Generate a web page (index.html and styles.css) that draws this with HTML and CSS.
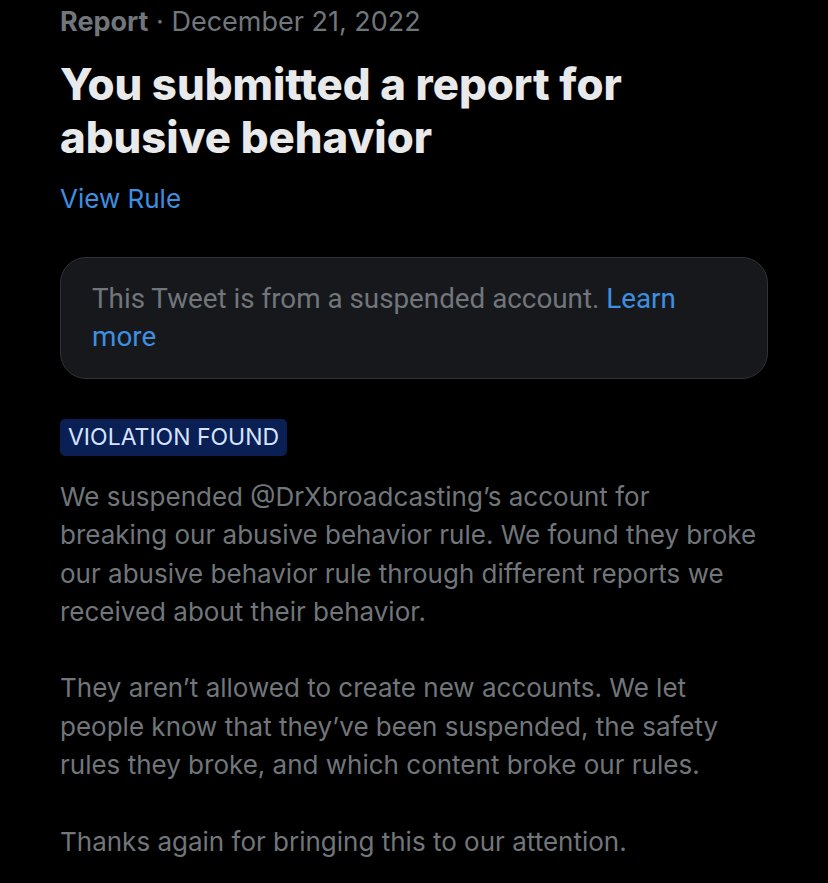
FILE: index.html
```html
<!DOCTYPE html>
<html lang="en">
<head>
<meta charset="utf-8">
<title>Report</title>
<link rel="stylesheet" href="styles.css">
</head>
<body>
<main class="page">
  <div class="meta"><span class="meta-strong">Report</span> · December 21, 2022</div>
  <h1 class="title">You submitted a report for abusive behavior</h1>
  <a class="link view-rule" href="#">View Rule</a>
  <div class="card">
    <p class="card-text">This Tweet is from a suspended account. <a class="link" href="#">Learn more</a></p>
  </div>
  <div class="badge">VIOLATION FOUND</div>
  <div class="body">
    <p>We suspended @DrXbroadcasting’s account for breaking our abusive behavior rule. We found they broke our abusive behavior rule through different reports we received about their behavior.</p>
    <p>They aren’t allowed to create new accounts. We let people know that they’ve been suspended, the safety rules they broke, and which content broke our rules.</p>
    <p>Thanks again for bringing this to our attention.</p>
  </div>
</main>
</body>
</html>
```
FILE: styles.css
```css
html, body {
  margin: 0;
  padding: 0;
  background: #000;
}
body {
  font-family: Inter, "Noto Sans", "Liberation Sans", sans-serif;
  color: #e7e9ea;
}
.page {
  width: 708px;
  padding: 0 0 0 60px;
  display: flex;
  flex-direction: column;
  align-items: flex-start;
}
.meta {
  font-size: 27px;
  line-height: 32px;
  color: #71767b;
  margin-top: 6px;
}
.meta-strong {
  font-weight: 700;
}
.title {
  font-size: 43.7px;
  line-height: 53px;
  font-weight: 800;
  margin: 20px 0 0 0;
  color: #e7e9ea;
  width: 640px;
}
.link {
  color: #3e8fe0;
  text-decoration: none;
}
.view-rule {
  font-size: 26px;
  line-height: 32px;
  margin-top: 19px;
}
.card {
  align-self: stretch;
  margin-top: 42px;
  background: #16181c;
  border: 1px solid #2f3336;
  border-radius: 26px;
  padding: 22px 31px;
}
.card-text {
  margin: 0;
  max-width: 610px;
  font-family: Roboto, "Liberation Sans", sans-serif;
  font-size: 27.8px;
  line-height: 38px;
  color: #71767b;
}
.badge {
  margin-top: 40px;
  background: #0a1f54;
  color: #d6e4ff;
  border-radius: 5px;
  font-size: 23px;
  line-height: 37px;
  padding: 0 8px;
}
.body {
  margin-top: 22px;
  width: 701px;
  font-size: 26px;
  line-height: 38.3px;
  color: #71767b;
}
.body p {
  margin: 0 0 38.3px 0;
}
```
